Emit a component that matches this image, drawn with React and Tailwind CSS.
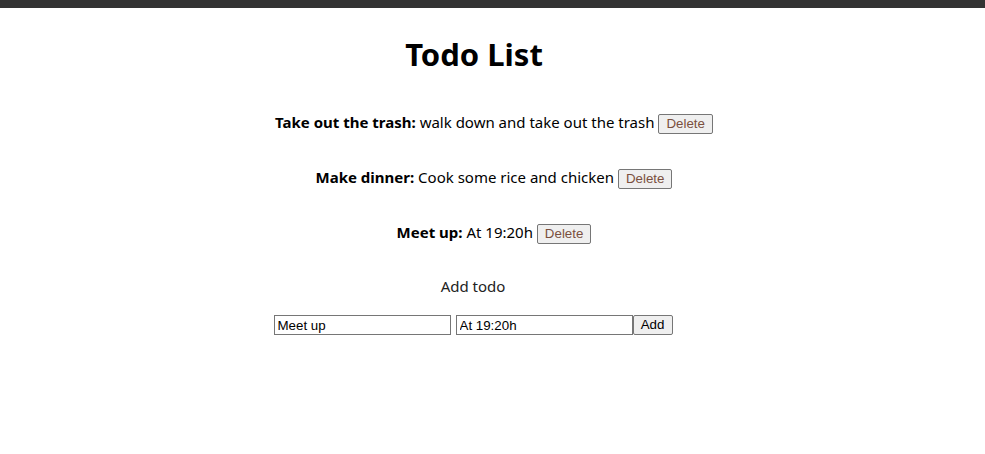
const todos = [
  { title: "Take out the trash", text: "walk down and take out the trash" },
  { title: "Make dinner", text: "Cook some rice and chicken" },
  { title: "Meet up", text: "At 19:20h" },
];

function Todo({ title, text }) {
  return (
    <div className="flex h-[55px] items-center justify-center pl-[3px]">
      <p className="text-[15px] text-black">
        <b>{title}:</b> {text}{" "}
        <button
          type="button"
          className="h-[20px] rounded-[2px] border border-[#767676] bg-[#efefef] px-[7px] align-middle font-['Liberation_Sans',Arial,sans-serif] text-[13.33px] leading-[18px] text-[#7a4f3e]"
        >
          Delete
        </button>
      </p>
    </div>
  );
}

export default function App() {
  return (
    <div className="min-h-[454px] bg-white font-['Noto_Sans',sans-serif]">
      <div className="h-[8px] bg-[#333]" />
      <div className="pr-[37px] pt-[26px] text-center">
        <h1 className="text-[31px] font-bold leading-[40px] text-black">Todo List</h1>
      </div>
      <div className="mt-[21px]">
        {todos.map((t) => (
          <Todo key={t.title} {...t} />
        ))}
      </div>
      <div className="mt-[14px] pr-[39px] text-center">
        <p className="text-[15px] leading-[24px] text-[#222]">Add todo</p>
        <form className="mt-[17px] flex justify-center" onSubmit={(e) => e.preventDefault()}>
          <input
            defaultValue="Meet up"
            className="h-[20px] w-[177px] border border-[#767676] px-[3px] font-['Liberation_Sans',Arial,sans-serif] text-[13.33px] text-black"
          />
          <input
            defaultValue="At 19:20h"
            className="ml-[5px] h-[20px] w-[177px] border border-[#767676] px-[3px] font-['Liberation_Sans',Arial,sans-serif] text-[13.33px] text-black"
          />
          <button
            type="submit"
            className="h-[20px] w-[40px] rounded-[2px] border border-[#767676] bg-[#efefef] font-['Liberation_Sans',Arial,sans-serif] text-[13.33px] leading-[18px] text-black"
          >
            Add
          </button>
        </form>
      </div>
    </div>
  );
}
